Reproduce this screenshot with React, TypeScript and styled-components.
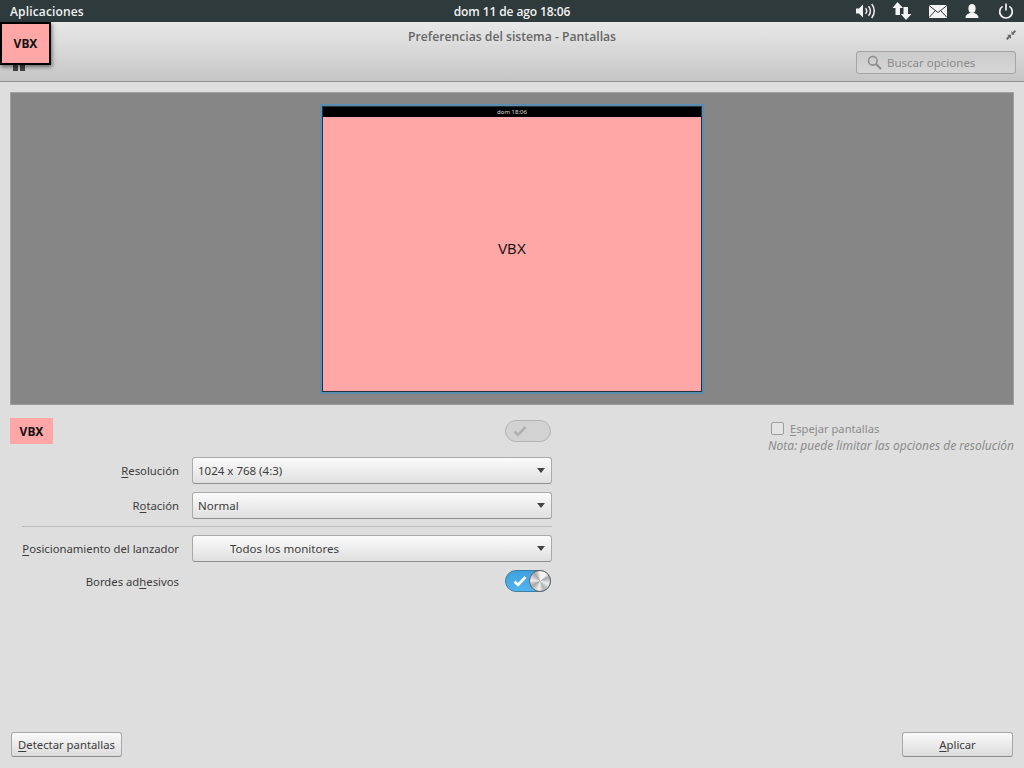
import React from "react";
import styled, { createGlobalStyle } from "styled-components";

const Global = createGlobalStyle`
  html, body { margin: 0; padding: 0; }
  body { font-family: "Noto Sans", "Open Sans", sans-serif; background: #dedede; color: #3a3a3a; }
  u { text-underline-offset: 2px; }
`;

const Page = styled.div`
  position: relative;
  width: 1024px;
  height: 768px;
  display: flex;
  flex-direction: column;
  overflow: hidden;
  background: #dedede;
`;

const TopBar = styled.div`
  height: 22px;
  flex: none;
  display: grid;
  grid-template-columns: 1fr auto 1fr;
  align-items: center;
  padding: 0 10px;
  background: #2f3a3d;
  color: #f2f2f2;
  font-family: "Open Sans", sans-serif;
  font-size: 12px;
  font-weight: 600;
`;

const AppMenu = styled.span`
  letter-spacing: 0.15px;
`;

const Clock = styled.span`
  letter-spacing: -0.1px;
`;

const Tray = styled.div`
  display: flex;
  justify-content: flex-end;
  align-items: center;
  gap: 16px;
`;

const Header = styled.div`
  height: 60px;
  flex: none;
  display: flex;
  flex-direction: column;
  box-sizing: border-box;
  padding-top: 7px;
  background: linear-gradient(#e8e8e8, #c6c6c6);
  border-bottom: 1px solid #8e8e8e;
`;

const TitleRow = styled.div`
  position: relative;
  height: 16px;
  text-align: center;
  font-family: "Open Sans", sans-serif;
  font-size: 12.2px;
  font-weight: 600;
  line-height: 16px;
  color: #666;
`;

const Restore = styled.svg`
  position: absolute;
  right: 8px;
  top: 1px;
`;

const SearchRow = styled.div`
  display: flex;
  justify-content: flex-end;
  margin-top: 6px;
  padding-right: 8px;
`;

const Search = styled.div`
  width: 160px;
  height: 23px;
  display: flex;
  align-items: center;
  gap: 5px;
  padding-left: 10px;
  box-sizing: border-box;
  border: 1px solid #a4a4a4;
  border-radius: 3px;
  background: linear-gradient(#cbcbcb, #d6d6d6);
  color: #8a8a8a;
  font-size: 11.5px;
`;

const Body = styled.div`
  flex: 1;
  display: flex;
  flex-direction: column;
  padding: 10px 10px 11px;
`;

const Canvas = styled.div`
  height: 313px;
  flex: none;
  display: flex;
  align-items: center;
  justify-content: center;
  background: #868686;
  border: 1px solid #a0a0a0;
  border-bottom-color: #9a9a9a;
  box-sizing: border-box;
`;

const MonitorFrame = styled.div`
  padding: 2px;
  background: #5b8db0;
`;

const Monitor = styled.div`
  width: 380px;
  height: 286px;
  display: flex;
  flex-direction: column;
  box-sizing: border-box;
  background: #ffa6a6;
  border: 1px solid #25323c;
`;

const MonitorBar = styled.div`
  height: 10px;
  flex: none;
  background: #000;
  color: #ddd;
  font-size: 6px;
  line-height: 10px;
  text-align: center;
`;

const MonitorName = styled.div`
  flex: 1;
  display: flex;
  align-items: center;
  justify-content: center;
  padding-bottom: 9px;
  font-family: "Liberation Sans", sans-serif;
  font-size: 14px;
  color: #111;
`;

const Settings = styled.div`
  flex: 1;
  display: flex;
  justify-content: space-between;
  padding-top: 13px;
`;

const FormColumn = styled.div`
  width: 542px;
`;

const NameRow = styled.div`
  height: 26px;
  display: flex;
  justify-content: space-between;
  align-items: center;
  margin-bottom: 13px;
`;

const NameTag = styled.div`
  width: 43px;
  height: 26px;
  display: flex;
  align-items: center;
  justify-content: center;
  background: #ffa6a6;
  color: #111;
  font-size: 12px;
  font-weight: 700;
`;

const Row = styled.div<{ $height?: number }>`
  height: ${(p) => p.$height ?? 27}px;
  display: grid;
  grid-template-columns: 169px 1fr;
  column-gap: 13px;
  align-items: center;
  margin-bottom: 8px;
`;

const Label = styled.div`
  text-align: right;
  font-size: 11.3px;
  white-space: nowrap;
  color: #3c3c3c;
`;

const Select = styled.div<{ $inset?: number }>`
  height: 27px;
  display: flex;
  align-items: center;
  justify-content: space-between;
  box-sizing: border-box;
  padding: 0 6px 0 ${(p) => p.$inset ?? 5}px;
  border: 1px solid #aaa;
  border-bottom-color: #8f8f8f;
  border-radius: 3px;
  background: linear-gradient(#fbfbfb, #e0e0e0);
  font-size: 11.5px;
  color: #3c3c3c;
`;

const Caret = styled.span`
  width: 0;
  height: 0;
  border-left: 4px solid transparent;
  border-right: 4px solid transparent;
  border-top: 5px solid #444;
`;

const Divider = styled.div`
  height: 1px;
  margin: -1px 0 8px 12px;
  background: #bcbcbc;
`;

const SwitchEnd = styled.div`
  display: flex;
  justify-content: flex-end;
`;

const SwitchTrack = styled.div<{ $on?: boolean }>`
  position: relative;
  width: 46px;
  height: 22px;
  margin-right: 1px;
  box-sizing: border-box;
  display: flex;
  align-items: center;
  padding-left: 7px;
  border-radius: 11px;
  border: 1px solid ${(p) => (p.$on ? "#3d7ea6" : "#b4b4b4")};
  background: ${(p) => (p.$on ? "linear-gradient(#3fa0dd, #52b4ee)" : "#d2d2d2")};
`;

const Knob = styled.div`
  position: absolute;
  right: -1px;
  top: -1px;
  width: 22px;
  height: 22px;
  box-sizing: border-box;
  border-radius: 50%;
  border: 1px solid #666;
  background: conic-gradient(#f4f4f4 0 12%, #a8a8a8 18%, #eee 30%, #b0b0b0 42%, #f2f2f2 52%, #a6a6a6 66%, #ececec 76%, #a8a8a8 90%, #f4f4f4);
`;

const MirrorColumn = styled.div`
  display: flex;
  flex-direction: column;
  align-items: flex-end;
  padding-top: 1px;
  color: #8c8c8c;
  font-size: 11.2px;
`;

const MirrorRow = styled.div`
  width: 245px;
  height: 18px;
  display: flex;
  align-items: center;
  gap: 6px;
  box-sizing: border-box;
  padding-left: 2px;
`;

const CheckBox = styled.span`
  width: 11px;
  height: 11px;
  border: 1px solid #9c9c9c;
  border-radius: 2px;
  background: #e4e4e4;
`;

const Note = styled.div`
  font-size: 12px;
  font-style: italic;
  line-height: 18px;
  white-space: nowrap;
`;

const Footer = styled.div`
  margin-top: auto;
  display: flex;
  justify-content: space-between;
  padding: 0 1px;
`;

const Button = styled.div<{ $width: number }>`
  width: ${(p) => p.$width}px;
  height: 25px;
  display: flex;
  align-items: center;
  justify-content: center;
  box-sizing: border-box;
  padding-bottom: 1px;
  border: 1px solid #a8a8a8;
  border-bottom-color: #8c8c8c;
  border-radius: 3px;
  background: linear-gradient(#fafafa, #dcdcdc);
  font-size: 11.3px;
  color: #3c3c3c;
`;

const Overlay = styled.div`
  position: absolute;
  left: 0;
  top: 22px;
  width: 51px;
  height: 43px;
  box-sizing: border-box;
  display: flex;
  align-items: center;
  justify-content: center;
  border: 2px solid #000;
  background: #ffa6a6;
  color: #111;
  font-size: 12px;
  font-weight: 700;
  box-shadow: 1px 2px 4px rgba(0, 0, 0, 0.5);
`;

const Handle = styled.div`
  position: absolute;
  left: 13px;
  top: 65px;
  width: 12px;
  height: 6px;
  background: linear-gradient(90deg, #444 0 5px, transparent 5px 7px, #444 7px);
`;

const CheckMark: React.FC<{ color: string }> = ({ color }) => (
  <svg width="14" height="12" viewBox="0 0 14 12">
    <path d="M1.5 6.5 L5 10 L12.5 2" fill="none" stroke={color} strokeWidth="2.6" />
  </svg>
);

const TrayIcons: React.FC = () => (
  <Tray>
    <svg width="20" height="16" viewBox="0 0 20 16" fill="none" stroke="#f2f2f2">
      <path d="M0 5.5h3l4-4v13l-4-4H0z" fill="#f2f2f2" stroke="none" />
      <path d="M9.5 5.2a3.8 3.8 0 0 1 0 5.6" strokeWidth="1.5" />
      <path d="M12.5 3.2a7 7 0 0 1 0 9.6" strokeWidth="1.5" />
      <path d="M15.7 1a11 11 0 0 1 0 14" strokeWidth="1.5" />
    </svg>
    <svg width="20" height="18" viewBox="0 0 20 18" fill="#f4f4f4">
      <path d="M5.5 0 L11 6 H8 V13 H3.5 V6 H0.5z" />
      <path d="M14 18 L8.8 12 H11.5 V5 H16 V12 H19.5z" />
    </svg>
    <svg width="18" height="13" viewBox="0 0 18 13" style={{ marginLeft: 1 }}>
      <rect width="18" height="13" fill="#f4f4f4" />
      <path d="M0 0.5 L9 7.5 L18 0.5 M0 12.5 L6.5 5.5 M18 12.5 L11.5 5.5" fill="none" stroke="#2f3a3d" strokeWidth="1" />
    </svg>
    <svg width="14" height="14" viewBox="0 0 14 14" fill="#f4f4f4" style={{ marginLeft: 2 }}>
      <ellipse cx="7" cy="4.5" rx="3.6" ry="4.5" />
      <path d="M0.5 14 C0.5 10.5 3 10 5 9 H9 C11 10 13.5 10.5 13.5 14z" />
    </svg>
    <svg width="16" height="16" viewBox="0 0 16 16" fill="none" stroke="#f4f4f4" strokeWidth="1.7" style={{ marginLeft: 3 }}>
      <path d="M4.6 3.4 A6.3 6.3 0 1 0 11.4 3.4" />
      <path d="M8 0.5 V7.5" />
    </svg>
  </Tray>
);

const App: React.FC = () => {
  return (
    <Page>
      <Global />
      <TopBar>
        <AppMenu>Aplicaciones</AppMenu>
        <Clock>dom 11 de ago 18:06</Clock>
        <TrayIcons />
      </TopBar>
      <Header>
        <TitleRow>
          Preferencias del sistema - Pantallas
          <Restore width="10" height="10" viewBox="0 0 10 10" fill="#666">
            <path d="M0 8.5 L2.5 6 L1 4.8 H5 V9 L3.7 7.5 L1.5 10z" />
            <path d="M10 1.5 L7.5 4 L9 4.8 H5.5 V0.5 L6.5 2.5 L8.5 0z" />
          </Restore>
        </TitleRow>
        <SearchRow>
          <Search>
            <svg width="15" height="15" viewBox="0 0 15 15" fill="none" stroke="#8e8e8e">
              <circle cx="5.8" cy="5.8" r="4.3" strokeWidth="1.6" />
              <path d="M9 9 L14 14" strokeWidth="2.2" />
            </svg>
            Buscar opciones
          </Search>
        </SearchRow>
      </Header>
      <Body>
        <Canvas>
          <MonitorFrame>
            <Monitor>
              <MonitorBar>dom 18:06</MonitorBar>
              <MonitorName>VBX</MonitorName>
            </Monitor>
          </MonitorFrame>
        </Canvas>
        <Settings>
          <FormColumn>
            <NameRow>
              <NameTag>VBX</NameTag>
              <SwitchTrack>
                <CheckMark color="#b0b0b0" />
              </SwitchTrack>
            </NameRow>
            <Row>
              <Label><u>R</u>esolución</Label>
              <Select>1024 x 768 (4:3)<Caret /></Select>
            </Row>
            <Row>
              <Label>R<u>o</u>tación</Label>
              <Select>Normal<Caret /></Select>
            </Row>
            <Divider />
            <Row>
              <Label><u>P</u>osicionamiento del lanzador</Label>
              <Select $inset={37}>Todos los monitores<Caret /></Select>
            </Row>
            <Row $height={22}>
              <Label>Bordes ad<u>h</u>esivos</Label>
              <SwitchEnd>
                <SwitchTrack $on>
                  <CheckMark color="#fff" />
                  <Knob />
                </SwitchTrack>
              </SwitchEnd>
            </Row>
          </FormColumn>
          <MirrorColumn>
            <MirrorRow>
              <CheckBox />
              <span><u>E</u>spejar pantallas</span>
            </MirrorRow>
            <Note>Nota: puede limitar las opciones de resolución</Note>
          </MirrorColumn>
        </Settings>
        <Footer>
          <Button $width={111}><span><u>D</u>etectar pantallas</span></Button>
          <Button $width={111}><span><u>A</u>plicar</span></Button>
        </Footer>
      </Body>
      <Handle />
      <Overlay>VBX</Overlay>
    </Page>
  );
};

export default App;
